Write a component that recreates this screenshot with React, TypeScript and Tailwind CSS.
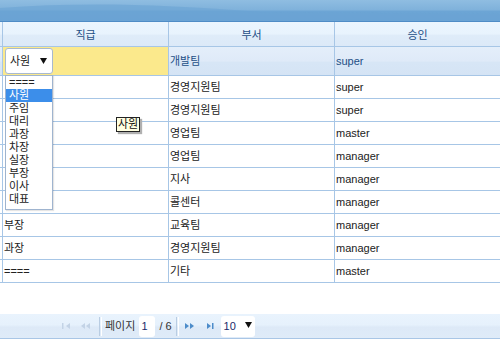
import React from "react";

const rows: { a: string; b: string; c: string }[] = [
  { a: "", b: "경영지원팀", c: "super" },
  { a: "", b: "경영지원팀", c: "super" },
  { a: "", b: "영업팀", c: "master" },
  { a: "", b: "영업팀", c: "manager" },
  { a: "", b: "지사", c: "manager" },
  { a: "", b: "콜센터", c: "manager" },
  { a: "부장", b: "교육팀", c: "manager" },
  { a: "과장", b: "경영지원팀", c: "manager" },
  { a: "====", b: "기타", c: "master" },
];

const options = ["====", "사원", "주임", "대리", "과장", "차장", "실장", "부장", "이사", "대표"];

function Sep() {
  return <div className="mx-[4px] h-[19px] w-[2px] border-l border-[#b9cde3] bg-white/0 shadow-[1px_0_0_#ffffff]" />;
}

function Tri({ dir, color }: { dir: "l" | "r"; color: string }) {
  return dir === "l" ? (
    <polygon points="4,0 0,3 4,6" fill={color} />
  ) : (
    <polygon points="0,0 4,3 0,6" fill={color} />
  );
}

export default function App() {
  return (
    <div
      className="relative h-[346px] w-[500px] overflow-hidden bg-white text-[11px]"
      style={{ fontFamily: '"Liberation Sans", "Noto Sans CJK KR", sans-serif' }}
    >
      {/* banner */}
      <div className="relative h-[22px] border-b border-[#4f8cc6] bg-[linear-gradient(#8fbde1,#80b2db_45%,#6ca5d5_55%,#6aa3d4)]">
        <svg className="absolute left-0 top-0" width="500" height="21">
          <path d="M0 8 C 80 2, 160 4, 260 12 L 500 14 L 500 21 L 0 21 Z" fill="#6aa3d3" opacity="0.6" />
        </svg>
      </div>

      {/* header */}
      <div className="grid h-[25px] grid-cols-[3px_166px_166px_1fr] border-b border-[#a7c6e6] bg-[linear-gradient(#ebf5fe,#e8f3fd_50%,#dfecf9_55%,#dce9f8)] text-[#1d4f86]">
        <div className="border-r border-[#a7c6e6]" />
        <div className="flex items-center justify-center border-r border-[#a7c6e6] pt-[2px]">직급</div>
        <div className="flex items-center justify-center border-r border-[#a7c6e6] pt-[2px]">부서</div>
        <div className="flex items-center justify-center pt-[2px]">승인</div>
      </div>

      {/* selected row */}
      <div className="grid h-[29px] grid-cols-[3px_166px_166px_1fr] border-b border-[#a7c6e6] bg-[linear-gradient(#e4eefa,#dfeaf8_50%,#d7e6f6_55%,#d5e4f5)] text-[#1d4f86]">
        <div className="border-r border-[#a7c6e6]" />
        <div className="border-r border-[#a7c6e6] bg-[#fbe98c] pl-[2px] pt-[1px]">
          <div className="flex h-[26px] w-[48px] items-center justify-between rounded-[3px] border border-[#a8b9cf] bg-white pl-[4px] pr-[5px] text-[#222]">
            <span>사원</span>
            <svg width="7" height="6"><polygon points="0,0 7,0 3.5,6" fill="#111" /></svg>
          </div>
        </div>
        <div className="flex items-center border-r border-[#a7c6e6] pl-[1px]">개발팀</div>
        <div className="flex items-center pl-[1px]">super</div>
      </div>

      {rows.map((r, i) => (
        <div
          key={i}
          className="grid h-[23px] grid-cols-[3px_166px_166px_1fr] border-b border-[#a7c6e6] text-[#222]"
        >
          <div className="border-r border-[#a7c6e6]" />
          <div className="flex items-center border-r border-[#a7c6e6] pl-[1px]">{r.a}</div>
          <div className="flex items-center border-r border-[#a7c6e6] pl-[1px]">{r.b}</div>
          <div className="flex items-center pl-[1px]">{r.c}</div>
        </div>
      ))}

      {/* pager */}
      <div className="mt-[31px] flex h-[25px] items-center border-b border-[#a9c6e6] bg-[linear-gradient(#e9f3fd,#e6f1fc_45%,#dde9f7_55%,#dfebf8)] pl-[62px] text-[#333]">
        <svg width="12" height="7" className="mr-[7px]">
          <rect x="0" y="0" width="1.5" height="6" fill="#c3d3e6" />
          <g transform="translate(4,0)"><Tri dir="l" color="#c3d3e6" /></g>
        </svg>
        <svg width="12" height="7" className="mr-[2px]">
          <g transform="translate(0,0)"><Tri dir="l" color="#c3d3e6" /></g>
          <g transform="translate(5,0)"><Tri dir="l" color="#c3d3e6" /></g>
        </svg>
        <Sep />
        <span className="mr-[4px]">페이지</span>
        <div className="flex h-[21px] w-[16px] items-center rounded-[3px] bg-white pl-[2px] text-[#1a2a6a]">1</div>
        <span className="ml-[4px]">/ 6</span>
        <Sep />
        <svg width="14" height="7" className="ml-[3px] mr-[8px]">
          <g transform="translate(0,0)"><Tri dir="r" color="#4d8cca" /></g>
          <g transform="translate(5,0)"><Tri dir="r" color="#4d8cca" /></g>
        </svg>
        <svg width="10" height="7" className="mr-[4px]">
          <Tri dir="r" color="#4d8cca" />
          <rect x="5" y="0" width="1.5" height="6" fill="#4d8cca" />
        </svg>
        <div className="flex h-[21px] w-[34px] items-center justify-between rounded-[3px] bg-white pl-[3px] pr-[3px] text-[#1a2a6a]">
          <span>10</span>
          <svg width="7" height="6" className="mb-[3px]"><polygon points="0,0 7,0 3.5,6" fill="#111" /></svg>
        </div>
      </div>

      {/* dropdown list */}
      <div className="absolute left-[5px] top-[75px] w-[48px] border border-[#9fb4cf] bg-white pb-[3px] shadow-[1px_1px_1px_rgba(0,0,0,0.1)]">
        {options.map((o, i) => (
          <div
            key={o}
            className={
              i === 1
                ? "h-[13px] bg-[#3c8eea] pl-[3px] leading-[13px] text-white"
                : "h-[13px] pl-[3px] leading-[13px] text-[#222]"
            }
          >
            {o}
          </div>
        ))}
      </div>

      {/* tooltip */}
      <div className="absolute left-[116px] top-[117px] flex h-[15px] items-center border border-[#222] bg-[#ffffe1] px-[1px] leading-[13px] text-[#111] shadow-[2px_2px_1px_#b0b0b0]">
        사원
      </div>
    </div>
  );
}
